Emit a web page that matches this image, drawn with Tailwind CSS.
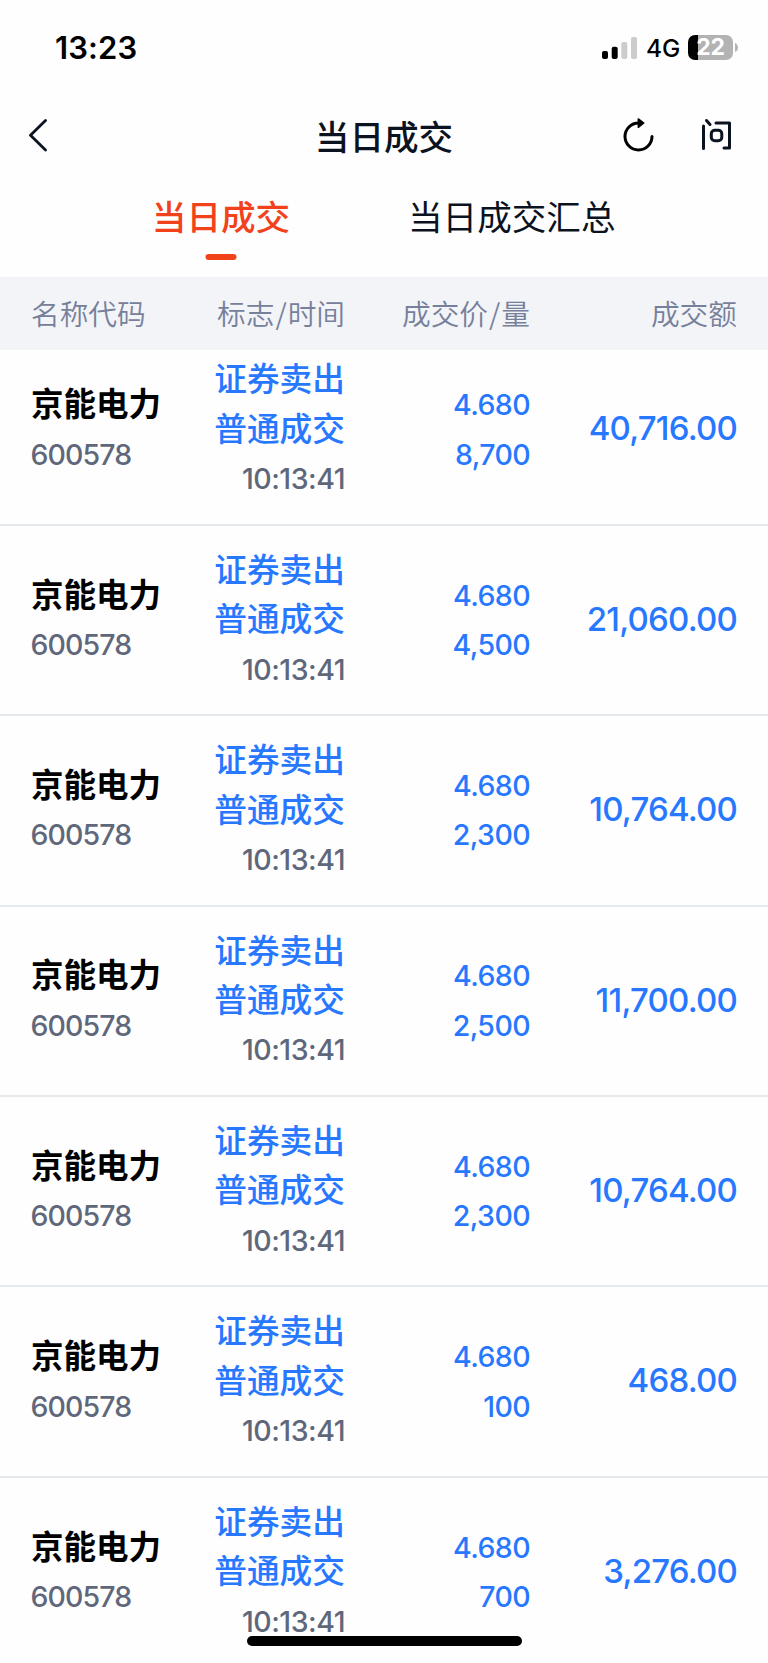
<!DOCTYPE html>
<html lang="zh-CN">
<head>
<meta charset="utf-8">
<title>当日成交</title>
<script src="https://cdn.jsdelivr.net/npm/@tailwindcss/browser@4"></script>
</head>
<body class="bg-white">
<div class="relative flex h-[1663px] w-[768px] flex-col overflow-hidden bg-[#fefefe] font-['Inter','Noto_Sans_CJK_SC',sans-serif] text-black">
  <header class="flex h-[95px] shrink-0 items-center justify-between pl-[55px] pr-[29px]">
    <div class="text-[31px] font-semibold leading-[40px] tracking-[0.1px]">13:23</div>
    <div class="flex items-center">
      <svg class="h-[24px] w-[36px]" viewBox="0 0 36 24"><g><rect x="0" y="15" width="6" height="8" rx="2"/><rect x="9.7" y="10.7" width="6" height="12.3" rx="2"/><rect x="19.3" y="6" width="6" height="17" rx="2" fill="#ccc"/><rect x="29" y="1" width="6" height="22" rx="2" fill="#ccc"/></g></svg>
      <div class="ml-[8px] w-[33px] text-[24.5px] font-medium leading-[30px] tracking-[-0.2px]">4G</div>
      <div class="ml-[9px] flex h-[25px] w-[45px] items-center justify-center rounded-[7px] bg-[linear-gradient(90deg,#000_10.5px,#b3b3b3_10.5px)] text-[23px] font-bold leading-[25px] tracking-[-0.2px] text-white">22</div>
      <svg class="ml-[2px] h-[9px] w-[4px]" viewBox="0 0 4 9"><path d="M0 0Q3 1.5 3 4.500T0 9Z" fill="#b3b3b3"/></svg>
    </div>
  </header>
  <nav class="grid h-[82px] shrink-0 grid-cols-[1fr_auto_1fr] items-center pl-[28px] pr-[36px]">
    <svg class="h-[34px] w-[20px]" viewBox="0 0 20 34" fill="none" stroke="#0b1220" stroke-width="2.8" stroke-linecap="round" stroke-linejoin="round"><path d="M17.500 1.500L2.500 16.200L17.500 31"/></svg>
    <h1 class="translate-x-[4px] translate-y-[1px] text-[34.6px] font-medium leading-[50px] text-[#0b1220]">当日成交</h1>
    <div class="-mt-[2px] flex items-center justify-end gap-[47px]">
      <svg class="h-[34px] w-[31px]" viewBox="0 0 31 34" fill="none" stroke="#000" stroke-width="3" stroke-linecap="round"><path d="M29 18.500A13.500 13.500 0 1 1 15.500 5H17"/><path d="M15.300 .9L20.800 5L15.300 9.300Z" fill="#000" stroke-width="1.5" stroke-linejoin="round"/></svg>
      <svg class="h-[34px] w-[31px]" viewBox="0 0 31 34" fill="none" stroke="#0b1220" stroke-width="3" stroke-linecap="round" stroke-linejoin="round"><path d="M2.500 8V30.500M5.500 2.500L9 6.500M15 5H28.500V30H23"/><rect x="10.300" y="12.300" width="10.500" height="10.500" rx="3.5"/></svg>
    </div>
  </nav>
  <div class="flex h-[100px] shrink-0 text-[34.6px] leading-[50px]">
    <div class="flex w-[442px] flex-col items-center pt-[15px] font-medium text-[#f2421b]">
      <div>当日成交</div>
      <div class="mt-[12px] h-[6px] w-[31px] -translate-x-[0.5px] rounded-full bg-[#f2421b]"></div>
    </div>
    <div class="-ml-[34px] pt-[15px] text-[#0b1220]">当日成交汇总</div>
  </div>
  <div class="grid h-[73px] shrink-0 grid-cols-[145px_169px_185px_207px] items-center bg-[#f2f4f8] pb-[2px] pl-[31px] text-right font-['Noto_Sans_CJK_SC',sans-serif] text-[28.7px] font-[350] leading-[44px] text-[#77809a]">
    <div class="text-left">名称代码</div><div>标志<span class="px-[1px]">/</span>时间</div><div>成交价<span class="px-[1px]">/</span>量</div><div>成交额</div>
  </div>
  <main class="min-h-0 flex-1 overflow-hidden">
    <div id="rows" class="-mt-[14.600px]"></div>
  </main>
  <div class="absolute left-[247px] top-[1636px] h-[10px] w-[275px] rounded-full bg-black"></div>
</div>
<script>
const trades = [['8,700','40,716.00'],['4,500','21,060.00'],['2,300','10,764.00'],['2,500','11,700.00'],['2,300','10,764.00'],['100','468.00'],['700','3,276.00']];
document.getElementById('rows').innerHTML = trades.map(([volume, amount]) => `
  <div class="grid h-[190.4px] grid-cols-[145px_169px_185px_207px] items-center border-b-2 border-[#e4e9ee] pl-[31px] text-right text-[28.500px] font-[450] leading-[49.4px] text-[#2878ff]">
    <div class="text-left"><div class="text-[32.5px] font-bold text-black">京能电力</div><div class="-ml-[0.5px] tracking-[-0.9px] text-[#5f677b]">600578</div></div>
    <div><div class="text-[32.7px] font-medium">证券卖出</div><div class="text-[32.7px] font-medium">普通成交</div><div class="tracking-[-0.500px] text-[#5f677b]">10:13:41</div></div>
    <div class="tracking-[-0.6px]"><div>4.680</div><div>${volume}</div></div>
    <div class="-mt-[1px] text-[33px] tracking-[-0.8px]">${amount}</div>
  </div>`).join('');
</script>
</body>
</html>
